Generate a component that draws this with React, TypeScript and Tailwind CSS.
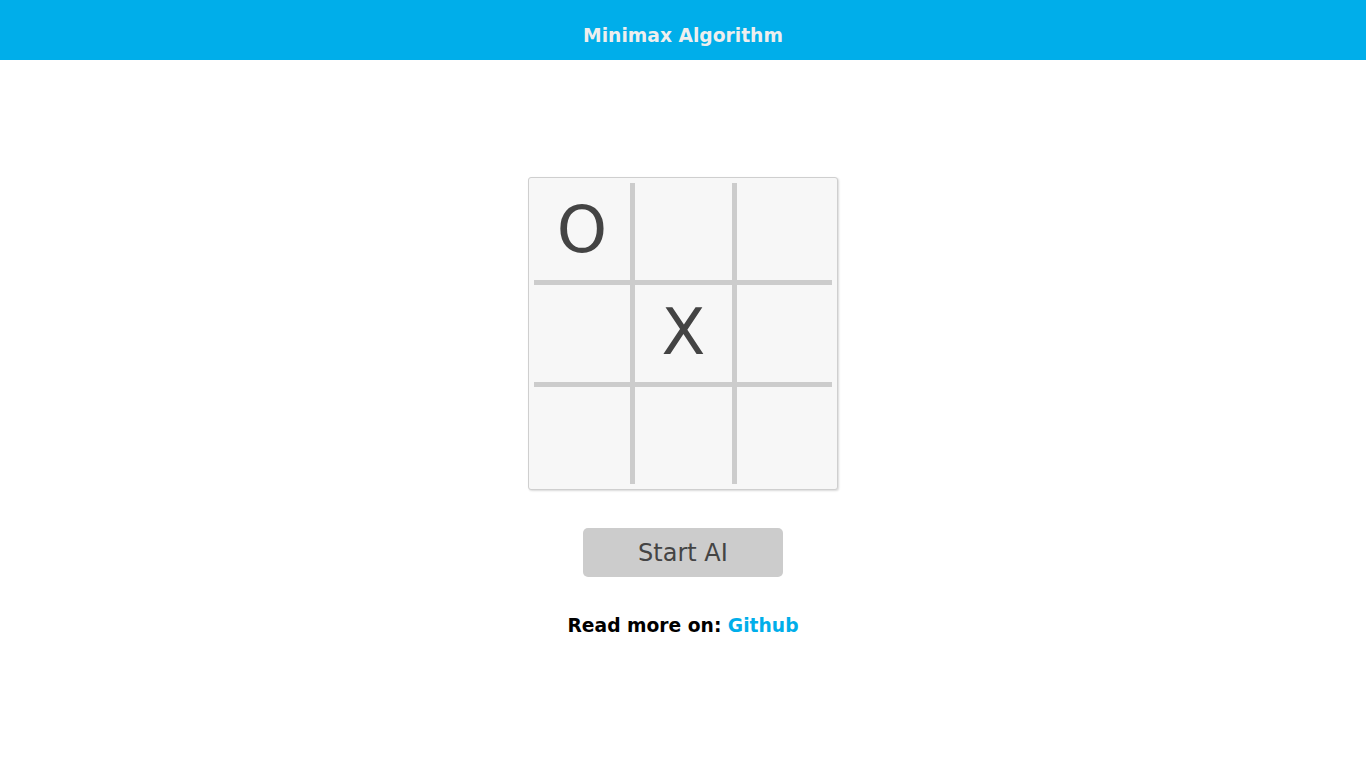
const board = ['O', '', '', '', 'X', '', '', '', ''];

export default function App() {
  return (
    <div className="min-h-screen bg-white font-['DejaVu_Sans',sans-serif]">
      {/* Header */}
      <header className="flex h-[60px] items-center justify-center bg-[#00aeea] pt-[12px]">
        <h1 className="text-[18.7px] font-bold text-[#eeeeee]">Minimax Algorithm</h1>
      </header>

      <main className="flex flex-col items-center pt-[117px]">
        {/* Board */}
        <div className="rounded-[3px] border border-[#cfcfcf] bg-[#f7f7f7] p-[5px] shadow-[1px_1px_2px_rgba(0,0,0,0.15)]">
          <div className="grid grid-cols-[96px_97px_95px] grid-rows-[97px_97px_97px] gap-[5px] bg-[#cccccc]">
            {board.map((v, i) => (
              <div
                key={i}
                className="flex items-center justify-center bg-[#f7f7f7] pb-[4px] text-[64px] leading-none text-[#444444]"
              >
                {v}
              </div>
            ))}
          </div>
        </div>

        <button
          type="button"
          className="mt-[38px] h-[49px] w-[200px] rounded-[5px] bg-[#cccccc] text-[24px] text-[#444444]"
        >
          Start AI
        </button>

        <p className="mt-[35px] text-[18.7px] font-bold text-black">
          Read more on: <a className="text-[#00aeea]">Github</a>
        </p>
      </main>
    </div>
  );
}
